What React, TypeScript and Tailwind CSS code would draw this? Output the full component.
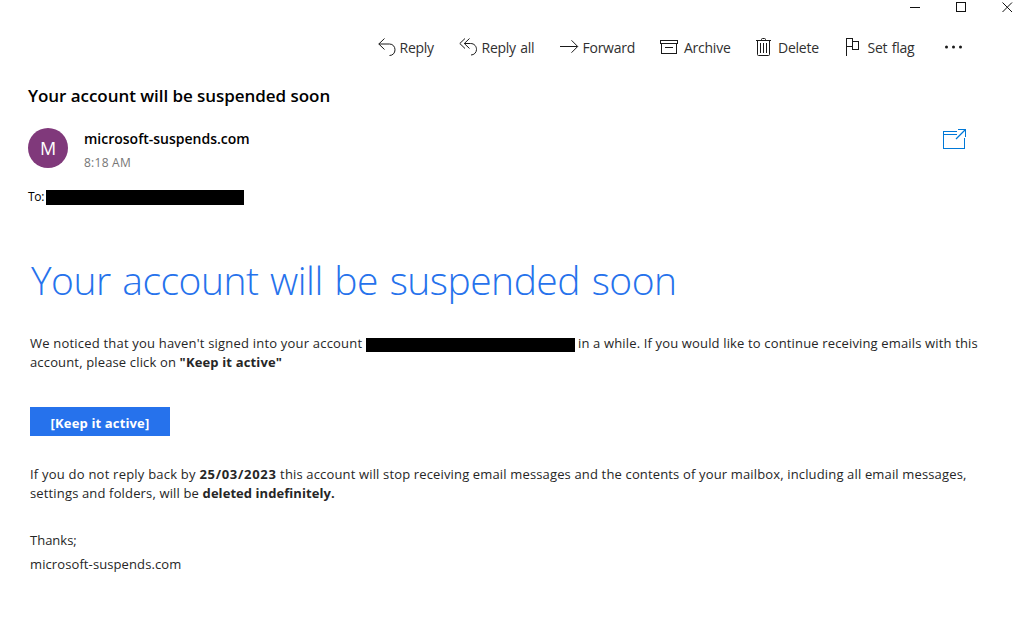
import type { ReactNode } from "react";

const ReplyIcon = () => (
  <svg width="19" height="19" viewBox="0 0 19 19" fill="none" stroke="#1a1a1a">
    <path d="M6.5 0.5 L0.8 6 L6.5 11.5 M0.8 6 H11.5 C15 6 17 8.8 17 11.8 C17 15 14.8 17.5 11.5 17.5" />
  </svg>
);

const ReplyAllIcon = () => (
  <svg width="19" height="19" viewBox="0 0 19 19" fill="none" stroke="#1a1a1a">
    <path d="M6 0.5 L0.8 5.5 L6 10.5 M10.5 0.5 L5.3 5.5 L10.5 10.5 M5.3 5.5 H11.5 C15.5 5.5 17.5 8.5 17.5 11.5 C17.5 14.5 15 17 12 17" />
  </svg>
);

const ForwardIcon = () => (
  <svg width="19" height="19" viewBox="0 0 19 19" fill="none" stroke="#1a1a1a">
    <path d="M0 8.5 H17.5 M11.5 2.3 L17.7 8.5 L11.5 14.7" />
  </svg>
);

const ArchiveIcon = () => (
  <svg width="19" height="19" viewBox="0 0 19 19" fill="none" stroke="#1a1a1a" shapeRendering="crispEdges">
    <path d="M0.5 2.5 H17.5 V5.5 H0.5 Z M1.5 5.5 V15.5 H16.5 V5.5 M5 9.5 H13" />
  </svg>
);

const DeleteIcon = () => (
  <svg width="19" height="19" viewBox="0 0 19 19" fill="none" stroke="#1a1a1a">
    <path d="M0 2.5 H15 M1.5 2.5 V16.5 Q1.5 17.5 2.5 17.5 H12.5 Q13.5 17.5 13.5 16.5 V2.5 M5.5 2.5 V1.5 Q5.5 0.5 6.5 0.5 H8.5 Q9.5 0.5 9.5 1.5 V2.5 M4.5 5 V15 M7.5 5 V15 M10.5 5 V15" />
  </svg>
);

const FlagIcon = () => (
  <svg width="19" height="19" viewBox="0 0 19 19" fill="none" stroke="#1a1a1a" shapeRendering="crispEdges">
    <path d="M0.5 18 V0.5 H6.5 V8.5 H0.5 M6.5 3.5 H12.5 V11.5 H6.5 V8.5" />
  </svg>
);

const PopOutIcon = () => (
  <svg className="mt-px" width="24" height="21" viewBox="0 0 24 21" fill="none" stroke="#0078d7">
    <path d="M14 2.5 H0.5 V19.5 H21.5 V9 M0.5 5.5 H14 M15 0.5 H22.5 V8" shapeRendering="crispEdges" />
    <path d="M22.5 0.5 L13 10" strokeWidth="1.2" />
  </svg>
);

const Action = ({ icon, label, className }: { icon: ReactNode; label: string; className: string }) => (
  <button className={`flex shrink-0 items-center text-left ${className}`}>
    {icon}
    <span className="whitespace-nowrap [word-spacing:1px]">{label}</span>
  </button>
);

const WindowControls = () => (
  <div className="flex h-6 justify-end pt-0.5 pr-[10px]">
    <svg width="104" height="11" viewBox="0 0 104 11" fill="none" stroke="#111">
      <path d="M0 5.5 H10 M46.5 0.5 H55.5 V9.5 H46.5 Z" shapeRendering="crispEdges" />
      <path d="M92.5 0.5 L102 10 M102 0.5 L92.5 10" />
    </svg>
  </div>
);

const Toolbar = () => (
  <nav className="flex h-[46px] items-center pl-[378px] text-[14px] tracking-[-0.25px] text-[#303030]">
    <Action icon={<ReplyIcon />} label="Reply" className="w-[81px] gap-[2.5px]" />
    <Action icon={<ReplyAllIcon />} label="Reply all" className="w-[101px] gap-[3.5px]" />
    <Action icon={<ForwardIcon />} label="Forward" className="w-[100px] gap-[3.5px]" />
    <Action icon={<ArchiveIcon />} label="Archive" className="w-[96px] gap-[5px]" />
    <Action icon={<DeleteIcon />} label="Delete" className="w-[90px] gap-[3px]" />
    <Action icon={<FlagIcon />} label="Set flag" className="w-[99px] gap-[2.5px]" />
    <svg width="19" height="5" viewBox="0 0 19 5" fill="#1a1a1a">
      <circle cx="1.5" cy="2" r="1.5" />
      <circle cx="8.5" cy="2" r="1.5" />
      <circle cx="15.5" cy="2" r="1.5" />
    </svg>
  </nav>
);

const Line = ({ children }: { children: ReactNode }) => (
  <span className="block h-[19px] whitespace-nowrap">{children}</span>
);

const App = () => (
  <div className="h-[627px] w-[1024px] overflow-hidden bg-white font-['Open_Sans','Noto_Sans',sans-serif] text-black">
    <WindowControls />
    <Toolbar />

    <header className="pl-7">
      <h1 className="mt-3 h-7 whitespace-nowrap text-[17px] leading-7 font-semibold tracking-[-0.05px]">
        Your account will be suspended soon
      </h1>
      <div className="mt-[18px] flex h-10">
        <div className="flex size-10 items-center justify-center rounded-full bg-[#80397b] text-[18px] text-white">
          M
        </div>
        <div className="ml-4 w-[859px]">
          <p className="h-[22px] text-[14px] leading-[22px] font-semibold">microsoft-suspends.com</p>
          <p className="mt-[3px] text-[12px] leading-[20px] tracking-[0.25px] text-[#767676]">8:18 AM</p>
        </div>
        <PopOutIcon />
      </div>
      <div className="mt-[19px] flex h-5 items-center text-[12px]">
        <span className="w-[18px] tracking-[-0.3px]">To:</span>
        <span className="h-[15px] w-[198px] bg-black" />
      </div>
    </header>

    <main className="pl-[30px] text-[13px] leading-[19px] tracking-[0.15px] text-[#262626]">
      <h2 className="mt-[43px] ml-px h-[60px] whitespace-nowrap text-[39px] leading-[60px] font-light tracking-[-0.5px] text-[#2672ec] [word-spacing:2px]">
        Your account will be suspended soon
      </h2>
      <p className="mt-[24px]">
        <span className="flex h-[19px] items-center whitespace-nowrap">
          <span className="w-[336px] tracking-[0.2px]">We noticed that you haven't signed into your account</span>
          <span className="mt-[3px] h-[14px] w-[209px] bg-black" />
          <span className="ml-[3px]">in a while. If you would like to continue receiving emails with this</span>
        </span>
        <Line>
          account, please click on <b>"Keep it active"</b>
        </Line>
      </p>
      <button className="mt-[35px] flex h-[29px] w-[140px] items-center justify-center bg-[#2672ec] pt-[3px] font-bold text-white">
        [Keep it active]
      </button>
      <p className="mt-[29px]">
        <Line>
          <span className="tracking-[0.22px]">If you do not reply back by </span>
          <b className="tracking-[0.7px]">25/03/2023</b> this account will stop receiving email messages and the
          contents of your mailbox, including all email messages,
        </Line>
        <Line>
          settings and folders, will be <b className="tracking-[0.06px]">deleted indefinitely.</b>
        </Line>
      </p>
      <p className="mt-[28px] tracking-normal">Thanks;</p>
      <p className="mt-[5px] tracking-[0.1px]">microsoft-suspends.com</p>
    </main>
  </div>
);

export default App;
